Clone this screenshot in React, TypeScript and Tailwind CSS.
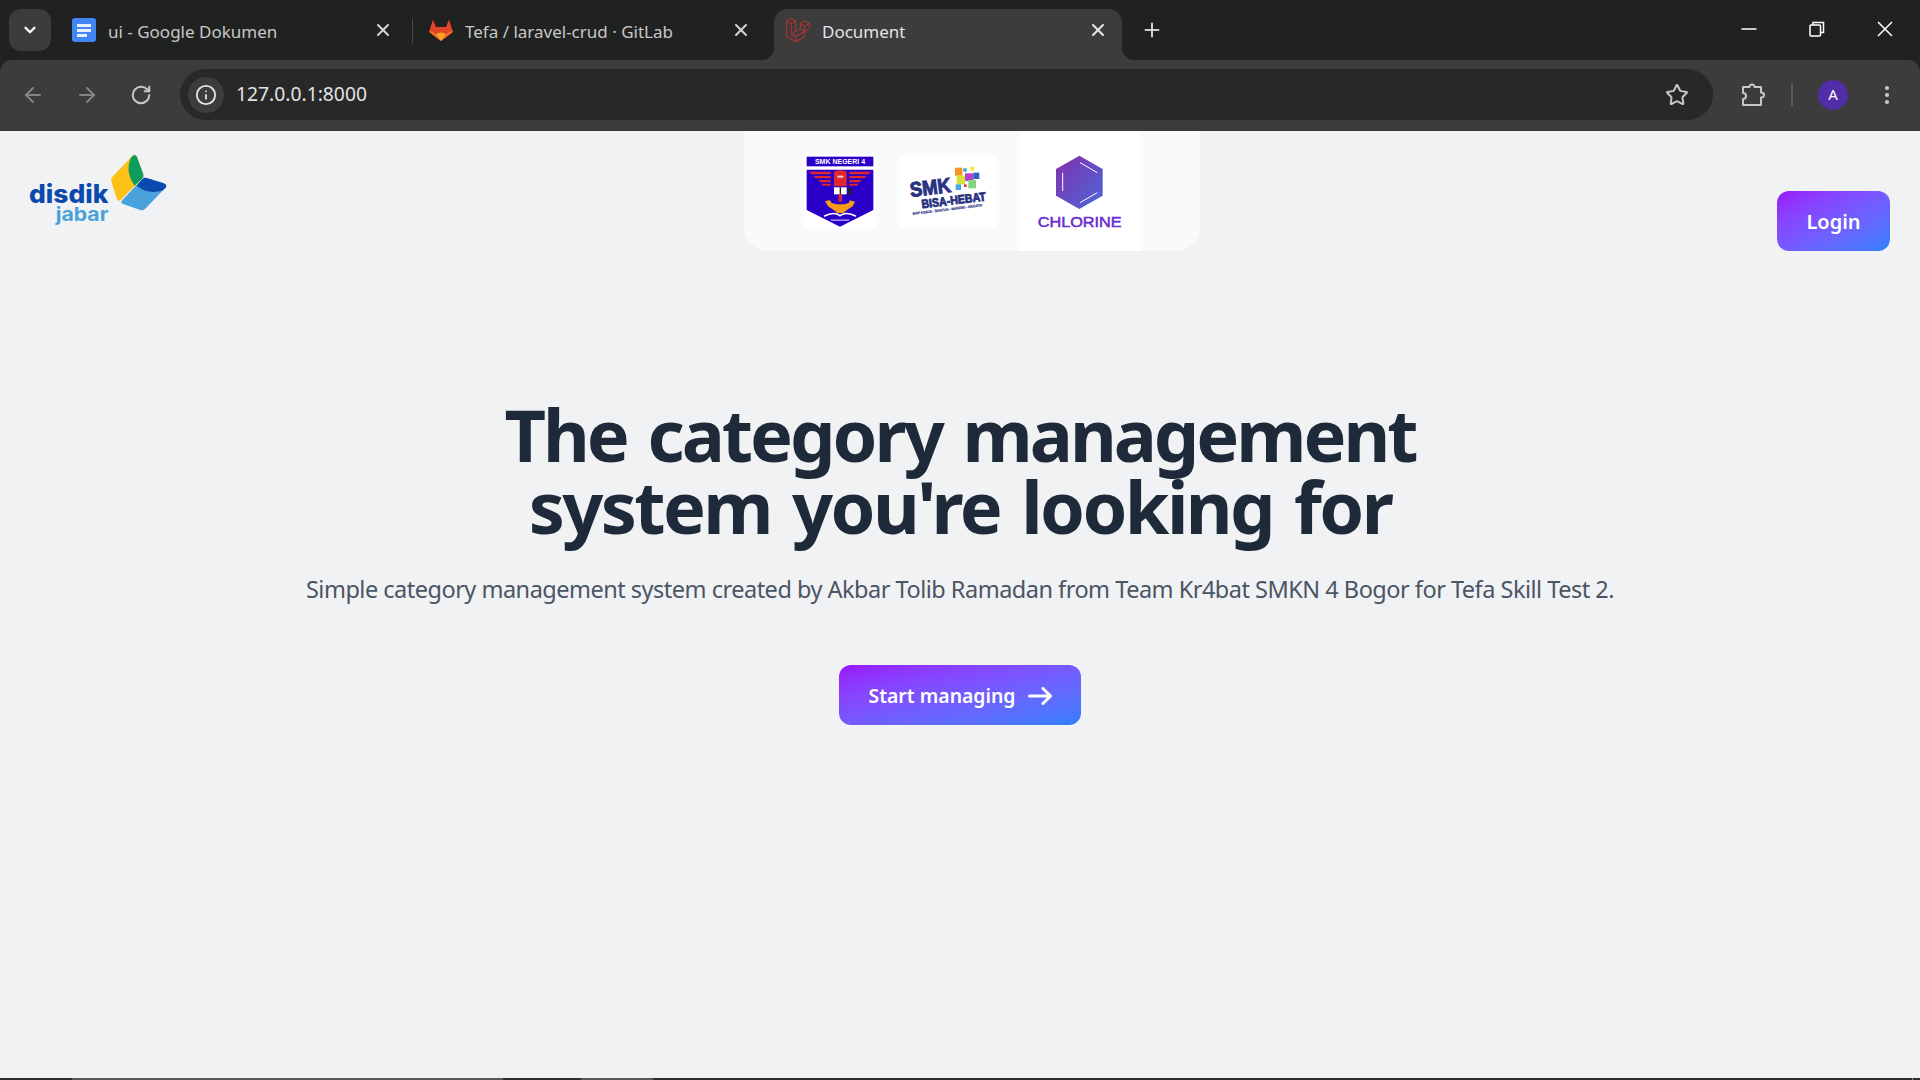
import React from 'react';
import { ArrowLeft, ArrowRight, ChevronDown, Plus, RotateCw, Star, X, Info, EllipsisVertical } from 'lucide-react';
import { SiLaravel } from 'react-icons/si';

const DocsIcon = () => (
  <svg width="24" height="24" viewBox="0 0 24 24" className="shrink-0">
    <rect width="24" height="24" rx="3" fill="#4285f4" />
    <rect x="5" y="6" width="14" height="3" fill="#e8f0fe" />
    <rect x="5" y="11" width="14" height="3" fill="#e8f0fe" />
    <rect x="5" y="16" width="10" height="3" fill="#e8f0fe" />
  </svg>
);

const GitlabIcon = () => (
  <svg width="24" height="24" viewBox="0 0 24 24" className="shrink-0">
    <path d="M4 1.500 L7 9 H17 L20 1.500 L23.500 12.500 Q24 14 22.500 15 L12 23 L1.500 15 Q0 14 0.500 12.500 Z" fill="#e24329" />
    <path d="M0.500 12.500 L7 16 L12 23 L1.500 15 Q0 14 0.500 12.500 Z" fill="#fc6d26" />
    <path d="M23.500 12.500 L17 16 L12 23 L22.500 15 Q24 14 23.500 12.500 Z" fill="#fc6d26" />
    <path d="M7 16 Q12 13 17 16 L12 23 Z" fill="#fca326" />
  </svg>
);

const ExtensionIcon = () => (
  <svg width="24" height="24" viewBox="0 0 24 24" fill="none" stroke="#c7c7c7" strokeWidth="2" strokeLinejoin="round">
    <path d="M2 4 H8.500 C8.500 0.500 13.500 0.500 13.500 4 H20 V9.500 C24 9.500 24 14.500 20 14.500 V22 H2 V16 C6 16 6 10 2 10 Z" />
  </svg>
);

const MinimizeIcon = () => (
  <svg width="16" height="16" viewBox="0 0 16 16" stroke="#ffffff" strokeWidth="1.500"><path d="M0.500 8 H15.500" /></svg>
);

const RestoreIcon = () => (
  <svg width="16" height="16" viewBox="0 0 16 16" fill="none" stroke="#ffffff" strokeWidth="1.500">
    <rect x="1" y="4" width="10.500" height="11" rx="1" />
    <path d="M4 4 V1.500 H14.500 V11.500 H11.500" />
  </svg>
);

const CloseIcon = () => (
  <svg width="16" height="16" viewBox="0 0 16 16" stroke="#ffffff" strokeWidth="1.500"><path d="M1 1 L15 15 M15 1 L1 15" /></svg>
);

const DisdikLogo = () => (
  <svg width="140" height="75" viewBox="85 70 420 225" className="mt-[22px] ml-[-2px]">
    <path d="M398 78 Q405 72 411 80 L431 134 Q433 142 427 147 L362 212 Q356 216 352 209 L335 156 Q332 148 338 142 Z" fill="#fbc117" />
    <path d="M394 84 Q405 72 411 80 L431 134 Q433 142 427 147 L405 168 Q375 125 394 84 Z" fill="#0e9c5c" />
    <path d="M438 144 L490 160 Q506 166 496 176 L436 238 Q430 244 422 241 L372 224 Q360 220 368 211 L426 150 Q432 143 438 144 Z" fill="#4aa2dc" />
    <path d="M438 144 L490 160 Q506 166 496 176 L490 182 Q445 196 411 168 L426 150 Q432 143 438 144 Z" fill="#0a49ad" />
    <text x="88" y="219" fontFamily="Inter, sans-serif" fontWeight="800" fontSize="76" fill="#0a49ad" textLength="238" lengthAdjust="spacingAndGlyphs">disdik</text>
    <text x="168" y="275" fontFamily="Inter, sans-serif" fontWeight="700" fontSize="57" fill="#4aa2dc" textLength="158" lengthAdjust="spacingAndGlyphs">jabar</text>
  </svg>
);

const SmkCrest = () => (
  <svg width="72" height="74" viewBox="222 88 216 220" className="bg-white shrink-0">
    <rect x="230" y="95" width="200" height="29" fill="#2a00c8" />
    <text x="330" y="118" textAnchor="middle" fontFamily="Liberation Sans, sans-serif" fontWeight="700" fontSize="21" fill="#ffffff">SMK NEGERI 4</text>
    <path d="M230 134 H430 V255 L330 305 L230 255 Z" fill="#2a00c8" />
    <g fill="#e0282e">
      <path d="M236 140 H302 V148 H246 Z M250 153 H302 V160 H258 Z M265 165 H302 V172 H272 Z M274 176 H302 V182 H280 Z" />
      <path d="M424 140 H358 V148 H414 Z M410 153 H358 V160 H402 Z M395 165 H358 V172 H388 Z M386 176 H358 V182 H380 Z" />
      <path d="M312 140 Q330 132 350 140 V184 H312 Z" />
    </g>
    <rect x="322" y="152" width="18" height="6" fill="#f3c6d0" />
    <rect x="312" y="187" width="38" height="21" fill="#ffffff" />
    <rect x="329" y="187" width="4" height="21" fill="#1b1b1b" />
    <rect x="353" y="188" width="11" height="20" fill="#222222" />
    <rect x="326" y="208" width="10" height="22" fill="#e0282e" />
    <path d="M285 228 L300 226 L305 234 L320 238 L342 238 L356 234 L360 226 L375 230 L368 244 L352 254 L340 264 H322 L310 254 L294 244 Z" fill="#f59c1a" />
    <path d="M282 274 Q312 258 330 272 Q350 258 378 274" fill="none" stroke="#ffffff" strokeWidth="5" />
    <rect x="303" y="283" width="54" height="5" fill="#9d8ce8" />
  </svg>
);

const SmkBisaHebat = () => (
  <svg width="96" height="72" viewBox="510 90 288 216" className="bg-white shrink-0">
    <rect x="675" y="128" width="22" height="24" fill="#f7941d" />
    <rect x="700" y="130" width="10" height="10" fill="#27a9c7" />
    <rect x="722" y="125" width="11" height="12" fill="#f2e92b" />
    <rect x="680" y="152" width="25" height="26" fill="#d6df3c" />
    <rect x="705" y="145" width="25" height="23" fill="#b93fd0" />
    <rect x="730" y="143" width="18" height="19" fill="#2c63c8" />
    <rect x="677" y="178" width="16" height="17" fill="#48a7e6" />
    <rect x="702" y="178" width="8" height="8" fill="#e8352c" />
    <rect x="715" y="165" width="23" height="25" fill="#7ed67d" />
    <g fontFamily="Liberation Sans, sans-serif" fontWeight="700" fill="#28327f" stroke="#28327f">
      <text x="542" y="216" fontSize="62" strokeWidth="3" textLength="124" lengthAdjust="spacingAndGlyphs" transform="rotate(-7 542 216)">SMK</text>
      <text x="576" y="250" fontSize="36" strokeWidth="2.500" textLength="194" lengthAdjust="spacingAndGlyphs" transform="rotate(-7 576 250)">BISA-HEBAT</text>
      <text x="548" y="270" fontSize="11" strokeWidth="0.500" textLength="210" lengthAdjust="spacingAndGlyphs" transform="rotate(-7 548 270)">SIAP KERJA - SANTUN - MANDIRI - KREATIF</text>
    </g>
  </svg>
);

const ChlorineLogo = () => (
  <svg width="120" height="120" viewBox="870 18 360 360" className="bg-white shrink-0">
    <defs>
      <linearGradient id="hex" x1="0" y1="0" x2="1" y2="1">
        <stop offset="0" stopColor="#8230ad" />
        <stop offset="1" stopColor="#4b68d8" />
      </linearGradient>
    </defs>
    <path d="M1048 92 L1118 132 V212 L1048 252 L978 212 V132 Z" fill="url(#hex)" />
    <path d="M1050 113 L1102 143 M1102 203 L1050 233 M998 143 V198" stroke="#ffffff" strokeWidth="3" fill="none" />
    <text x="923" y="305" fontFamily="Liberation Sans, sans-serif" fontWeight="400" fontSize="42" stroke="#6a2bd0" strokeWidth="1.500" fill="#6a2bd0" textLength="252" lengthAdjust="spacingAndGlyphs">CHLORINE</text>
  </svg>
);

const tabText = 'ml-[12px] mt-[3px] text-[17px] whitespace-nowrap';

const BrowserChrome = () => (
  <div className="font-['Noto_Sans',sans-serif] h-[131px] shrink-0 bg-[#202222]">
    <div className="h-[60px] flex items-start">
      <div className="ml-[9px] mt-[9px] w-[42px] h-[42px] rounded-xl bg-[#3c3c3c] flex items-center justify-center">
        <ChevronDown size={18} strokeWidth={3} className="text-white" />
      </div>
      <div className="w-[361px] h-[60px] pl-[21px] pr-[19px] flex items-center">
        <DocsIcon />
        <span className={`${tabText} text-[#c7c7c7]`}>ui - Google Dokumen</span>
        <X size={20} strokeWidth={2.5} className="ml-auto text-[#d0d0d0]" />
      </div>
      <div className="mt-[19px] w-px h-[24px] bg-[#4a4a4a]" />
      <div className="w-[361px] h-[60px] pl-[16px] pr-[23px] flex items-center">
        <GitlabIcon />
        <span className={`${tabText} text-[#c7c7c7]`}>Tefa / laravel-crud · GitLab</span>
        <X size={20} strokeWidth={2.5} className="ml-auto text-[#d0d0d0]" />
      </div>
      <div className="relative mt-[9px] w-[348px] h-[51px] bg-[#3c3c3c] rounded-t-[14px] pl-[12px] pr-[14px] pb-[9px] flex items-center">
        <span className="absolute left-[-12px] bottom-0 w-[12px] h-[12px] bg-[radial-gradient(circle_at_0_0,transparent_12px,#3c3c3c_12px)]" />
        <span className="absolute right-[-12px] bottom-0 w-[12px] h-[12px] bg-[radial-gradient(circle_at_100%_0,transparent_12px,#3c3c3c_12px)]" />
        <SiLaravel size={24} color="#d9302b" className="shrink-0" />
        <span className={`${tabText} text-[#e3e3e3]`}>Document</span>
        <X size={20} strokeWidth={2.5} className="ml-auto text-[#e3e3e3]" />
      </div>
      <Plus size={22} strokeWidth={2.2} className="ml-[19px] mt-[19px] text-[#d0d0d0]" />
      <div className="ml-auto flex mt-[21px] items-center pr-[27px] gap-[52px]">
        <MinimizeIcon />
        <RestoreIcon />
        <CloseIcon />
      </div>
    </div>
    <div className="h-[69px] bg-[#3c3c3c] rounded-t-xl flex items-center pl-[21px] pr-[21px]">
      <ArrowLeft size={24} strokeWidth={2} className="text-[#858585]" />
      <ArrowRight size={24} strokeWidth={2} className="ml-[30px] text-[#858585]" />
      <RotateCw size={22} strokeWidth={2.2} className="ml-[31px] text-[#c7c7c7]" />
      <div className="ml-[28px] flex-1 h-[51px] bg-[#282828] rounded-full flex items-center pl-[8px] pr-[24px]">
        <div className="w-[36px] h-[36px] rounded-full bg-[#3c3c3c] flex items-center justify-center">
          <Info size={22} strokeWidth={2} className="text-[#e3e3e3]" />
        </div>
        <span className="ml-[12px] text-[19.3px] text-[#e3e3e3]">127.0.0.1:8000</span>
        <Star size={24} strokeWidth={2} className="ml-auto text-[#c7c7c7]" />
      </div>
      <div className="ml-[28px]"><ExtensionIcon /></div>
      <div className="ml-[26px] w-[2px] h-[23px] bg-[#5a5a5a]" />
      <div className="ml-[25px] w-[30px] h-[30px] rounded-full bg-[#512da8] flex items-center justify-center text-white text-[15px]">A</div>
      <EllipsisVertical size={24} strokeWidth={2.2} className="ml-[27px] text-[#c7c7c7]" />
    </div>
    <div className="h-[2px] bg-[#3c3c3c]" />
  </div>
);

export default function App() {
  return (
    <div className="h-screen overflow-hidden flex flex-col bg-[#f1f2f4] font-['Noto_Sans',sans-serif]">
      <BrowserChrome />

      <nav className="grid grid-cols-[714px_456px_1fr] pl-[30px] pr-[30px] h-[120px] shrink-0">
        <div><DisdikLogo /></div>
        <div className="bg-[#f9fafb] rounded-b-3xl flex items-center pl-[60px]">
          <SmkCrest />
          <div className="ml-[24px]"><SmkBisaHebat /></div>
          <div className="ml-[24px]"><ChlorineLogo /></div>
        </div>
        <div className="flex justify-end items-end">
          <button className="w-[113px] h-[60px] pt-[2px] rounded-xl bg-gradient-to-br from-purple-600 to-blue-500 text-white text-[20px] font-semibold">Login</button>
        </div>
      </nav>

      <main className="flex-1 pt-[147px] flex flex-col items-center text-center">
        <h1 className="text-7xl font-bold text-gray-800 [word-spacing:5px]">
          <span className="tracking-[-3px]">The category management</span><br />
          <span className="tracking-[-2.6px]">system you're looking for</span>
        </h1>
        <p className="mt-[31px] text-[23.5px] leading-8 text-gray-600 tracking-[-0.5px] whitespace-nowrap">
          Simple category management system created by Akbar Tolib Ramadan from Team Kr4bat SMKN 4 Bogor for Tefa Skill Test 2.
        </p>
        <button className="mt-[60px] w-[242px] h-[60px] pt-[1px] rounded-xl bg-gradient-to-br from-purple-600 to-blue-500 text-white text-[19.4px] font-semibold flex items-center justify-center gap-[12px]">
          Start managing
          <svg width="24" height="18" viewBox="0 0 24 18" fill="none" stroke="currentColor" strokeWidth="3" strokeLinecap="round" strokeLinejoin="round">
            <path d="M1.500 9 H22 M15 1.500 L22.500 9 L15 16.500" />
          </svg>
        </button>
      </main>

      <div className="relative h-[2px] bg-[#2e2e2e] flex shrink-0">
        <div className="ml-[72px] w-[431px] bg-[#5a5a5a]" />
        <div className="ml-[78px] w-[72px] bg-[#5a5a5a]" />
        <div className="ml-auto mr-[7px] w-px bg-[#8a8a8a]" />
      </div>
    </div>
  );
}
